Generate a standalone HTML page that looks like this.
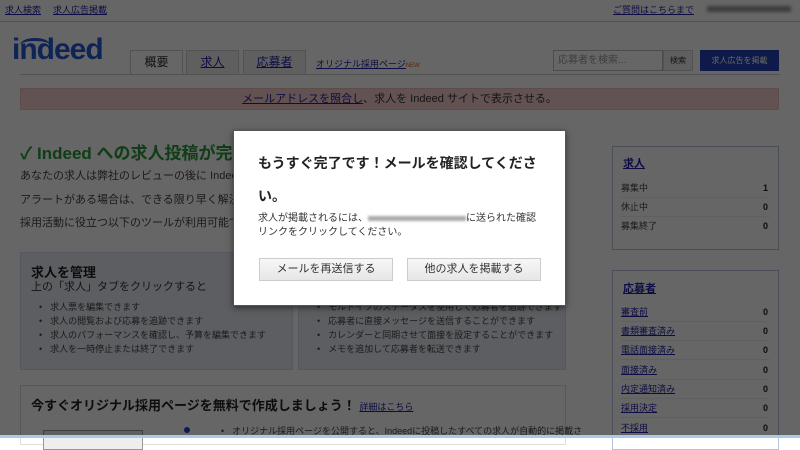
<!DOCTYPE html>
<html><head><meta charset="utf-8"><style>
*{margin:0;padding:0;box-sizing:border-box}
body{width:800px;height:438px;overflow:hidden;position:relative;background:#fff;font-family:"Liberation Sans","Noto Sans CJK JP",sans-serif;color:#333}
.a{position:absolute;white-space:nowrap}
a,.lk{color:#2222aa;text-decoration:underline}
.tab{position:absolute;top:50px;height:25px;border:1px solid #ccc;background:#eee;font-size:12px;text-align:center;line-height:23px}
.box{position:absolute;background:#e6ecf6;border:1px solid #d4dced}
.side{position:absolute;border:1px solid #b8c4dc;background:#fff}
.row{position:absolute;left:8px;right:8px;height:19px;border-bottom:1px solid #eee;font-size:9px;line-height:19px;color:#444}
.row b{position:absolute;right:2px;color:#222}
ul{list-style:none}
li{font-size:9px;height:14px;color:#444}
li:before{content:"•";margin-right:8px}
#ov{position:absolute;left:0;top:0;width:800px;height:438px;background:rgba(0,0,0,0.6)}
#modal{position:absolute;left:233px;top:130px;width:333px;height:176px;background:#fff;border:1px solid #555;box-shadow:0 2px 6px rgba(0,0,0,.5)}
.btn{position:absolute;top:127px;width:134px;height:23px;background:linear-gradient(#f7f7f7,#e6e6e6);border:1px solid #ccc;font-size:11px;text-align:center;line-height:21px;color:#333}
</style></head><body>
<div class="a" style="left:5px;top:3px;font-size:9px"><a>求人検索</a></div>
<div class="a" style="left:53px;top:3px;font-size:9px"><a>求人広告掲載</a></div>
<div class="a" style="left:613px;top:3px;font-size:9px"><a>ご質問はこちらまで</a></div>
<div class="a" style="left:707px;top:6px;width:84px;height:6px;background:#999;filter:blur(1.5px)"></div>
<div class="a" style="left:0;top:21px;width:800px;height:1px;background:#ccc"></div>
<div class="a" style="left:12px;top:33px;font-size:30px;font-weight:bold;color:#2557d6;letter-spacing:-1px">indeed</div>
<div class="a" style="left:20px;top:38px;width:30px;height:14px;border-top:3px solid #2557d6;border-radius:50% 50% 0 0"></div>
<div class="tab" style="left:130px;width:53px;background:#fff;border-bottom-color:#fff;color:#333">概要</div>
<div class="tab" style="left:186px;width:53px"><span class="lk">求人</span></div>
<div class="tab" style="left:243px;width:63px"><span class="lk">応募者</span></div>
<div class="a" style="left:316px;top:57px;font-size:9px"><a>オリジナル採用ページ</a><span style="color:#e06010;font-size:6px">NEW</span></div>
<div class="a" style="left:553px;top:50px;width:110px;height:21px;border:1px solid #bbb;font-size:10px;color:#999;line-height:19px;padding-left:4px">応募者を検索...</div>
<div class="a" style="left:663px;top:50px;width:30px;height:21px;border:1px solid #ccc;background:#eee;font-size:8px;text-align:center;line-height:19px">検索</div>
<div class="a" style="left:700px;top:50px;width:79px;height:21px;background:#2444b8;color:#fff;font-size:8px;text-align:center;line-height:21px">求人広告を掲載</div>
<div class="a" style="left:20px;top:74px;width:760px;height:1px;background:#ccc"></div>
<div class="a" style="left:20px;top:88px;width:759px;height:22px;background:#f4cccc;border:1px solid #ebbcbc;font-size:11px;text-align:center;line-height:20px;color:#333"><a>メールアドレスを照合し</a>、求人を Indeed サイトで表示させる。</div>
<div class="a" style="left:20px;top:139px;font-size:17px;font-weight:bold;color:#2a9a3a">✓ Indeed への求人投稿が完了しました</div>
<div class="a" style="left:20px;top:167px;font-size:11px;color:#444">あなたの求人は弊社のレビューの後に Indeed に掲載されます。</div>
<div class="a" style="left:20px;top:191px;font-size:11px;color:#444">アラートがある場合は、できる限り早く解決すること。</div>
<div class="a" style="left:20px;top:214px;font-size:11px;color:#444">採用活動に役立つ以下のツールが利用可能です。</div>
<div class="box" style="left:20px;top:252px;width:273px;height:118px">
<div class="a" style="left:10px;top:9px;font-size:13px;font-weight:bold;color:#222">求人を管理</div>
<div class="a" style="left:10px;top:25px;font-size:11px;color:#333">上の「求人」タブをクリックすると</div>
<ul class="a" style="left:18px;top:47px"><li>求人票を編集できます</li><li>求人の閲覧および応募を追跡できます</li><li>求人のパフォーマンスを確認し、予算を編集できます</li><li>求人を一時停止または終了できます</li></ul></div>
<div class="box" style="left:298px;top:252px;width:268px;height:118px">
<ul class="a" style="left:18px;top:47px"><li>モルドイツのステータスを使用して応募者を追跡できます</li><li>応募者に直接メッセージを送信することができます</li><li>カレンダーと同期させて面接を設定することができます</li><li>メモを追加して応募者を転送できます</li></ul></div>
<div class="a" style="left:20px;top:385px;width:546px;height:60px;border:1px solid #ddd;background:#fff">
<div class="a" style="left:10px;top:9px;font-size:13px;font-weight:bold;color:#222">今すぐオリジナル採用ページを無料で作成しましょう！ <span style="font-size:9px;font-weight:normal" class="lk">詳細はこちら</span></div>
<div class="a" style="left:22px;top:44px;width:100px;height:20px;border:1px solid #999;background:#eee"></div>
<div class="a" style="left:163px;top:41px;width:6px;height:6px;border-radius:50%;background:#2444b8"></div>
<ul class="a" style="left:200px;top:38px"><li>オリジナル採用ページを公開すると、Indeedに投稿したすべての求人が自動的に掲載さ</li></ul></div>
<div class="side" style="left:612px;top:146px;width:167px;height:104px">
<div class="a lk" style="left:10px;top:8px;font-size:11px;font-weight:bold">求人</div>
<div class="row" style="top:32px">募集中<b>1</b></div>
<div class="row" style="top:51px">休止中<b>0</b></div>
<div class="row" style="top:70px;border:0">募集終了<b>0</b></div></div>
<div class="side" style="left:612px;top:270px;width:167px;height:180px">
<div class="a lk" style="left:10px;top:9px;font-size:11px;font-weight:bold">応募者</div>
<div class="row" style="top:32px"><span class="lk">審査前</span><b>0</b></div>
<div class="row" style="top:51px"><span class="lk">書類審査済み</span><b>0</b></div>
<div class="row" style="top:70px"><span class="lk">電話面接済み</span><b>0</b></div>
<div class="row" style="top:90px"><span class="lk">面接済み</span><b>0</b></div>
<div class="row" style="top:109px"><span class="lk">内定通知済み</span><b>0</b></div>
<div class="row" style="top:128px"><span class="lk">採用決定</span><b>0</b></div>
<div class="row" style="top:148px"><span class="lk">不採用</span><b>0</b></div></div>
<div id="ov"></div>
<div class="a" style="left:0;top:435px;width:800px;height:3px;background:#a9c9e6"></div>
<div id="modal">
<div class="a" style="left:24px;top:16px;font-size:14px;font-weight:bold;color:#222;line-height:33px;white-space:normal;width:290px">もうすぐ完了です！メールを確認してください。</div>
<div class="a" style="left:24px;top:81px;font-size:10px;color:#333;line-height:14px;white-space:normal;width:280px">求人が掲載されるには、<span style="display:inline-block;width:98px;height:5px;background:#aaa;filter:blur(1.2px);vertical-align:middle"></span>に送られた確認<br>リンクをクリックしてください。</div>
<div class="btn" style="left:25px">メールを再送信する</div>
<div class="btn" style="left:173px">他の求人を掲載する</div>
</div>
</body></html>
